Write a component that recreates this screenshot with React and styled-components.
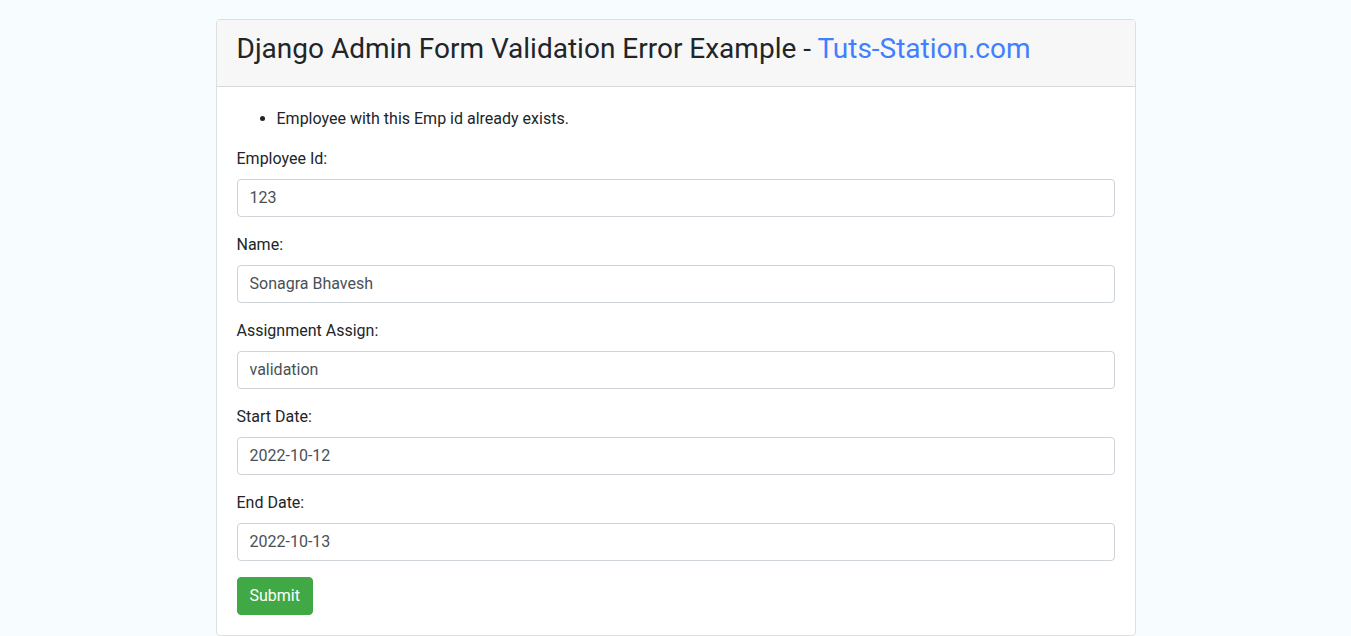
import React from "react";
import styled, { createGlobalStyle } from "styled-components";

const GlobalStyle = createGlobalStyle`
  *, *::before, *::after {
    box-sizing: border-box;
  }

  body {
    margin: 0;
    background: #f7fcff;
    color: #212529;
    font-family: Roboto, "Liberation Sans", sans-serif;
    font-size: 16px;
    line-height: 24px;
  }
`;

const Container = styled.main`
  width: 100%;
  max-width: 950px;
  margin: 0 auto;
  padding: 19px 15px 0;
`;

const Card = styled.section`
  background: #fff;
  border: 1px solid #dfdfdf;
  border-radius: 4px;
`;

const CardHeader = styled.header`
  padding: 12px 20px;
  background: #f7f7f7;
  border-bottom: 1px solid #d8d8d8;
  border-radius: 3px 3px 0 0;
`;

const Title = styled.h3`
  margin: 0 0 8px;
  font-size: 28px;
  font-weight: 400;
  line-height: 34px;
`;

const SiteName = styled.a`
  color: #407fff;
  text-decoration: none;
`;

const Form = styled.form`
  padding: 20px;
`;

const ErrorList = styled.ul`
  margin: 0 0 16px;
  padding-left: 40px;
`;

const Field = styled.div`
  margin-bottom: 16px;
`;

const Label = styled.label`
  display: inline-block;
  margin-bottom: 8px;
`;

const Input = styled.input`
  display: block;
  width: 100%;
  height: 38px;
  padding: 5px 12px 7px;
  border: 1px solid #ced4da;
  border-radius: 4px;
  background: #fff;
  color: #495057;
  font: inherit;
`;

const SubmitButton = styled.button`
  display: block;
  padding: 6px 12px;
  border: 1px solid #40a845;
  border-radius: 4px;
  background: #40a845;
  color: #fff;
  font: inherit;
  cursor: pointer;
`;

const fields = [
  { id: "emp_id", label: "Employee Id:", value: "123" },
  { id: "name", label: "Name:", value: "Sonagra Bhavesh" },
  { id: "assignment", label: "Assignment Assign:", value: "validation" },
  { id: "start_date", label: "Start Date:", value: "2022-10-12" },
  { id: "end_date", label: "End Date:", value: "2022-10-13" },
];

export default function App() {
  return (
    <>
      <GlobalStyle />
      <Container>
        <Card>
          <CardHeader>
            <Title>
              Django Admin Form Validation Error Example -{" "}
              <SiteName href="#">Tuts-Station.com</SiteName>
            </Title>
          </CardHeader>
          <Form onSubmit={(event) => event.preventDefault()}>
            <ErrorList>
              <li>Employee with this Emp id already exists.</li>
            </ErrorList>
            {fields.map(({ id, label, value }) => (
              <Field key={id}>
                <Label htmlFor={id}>{label}</Label>
                <Input id={id} name={id} type="text" defaultValue={value} />
              </Field>
            ))}
            <SubmitButton type="submit">Submit</SubmitButton>
          </Form>
        </Card>
      </Container>
    </>
  );
}
